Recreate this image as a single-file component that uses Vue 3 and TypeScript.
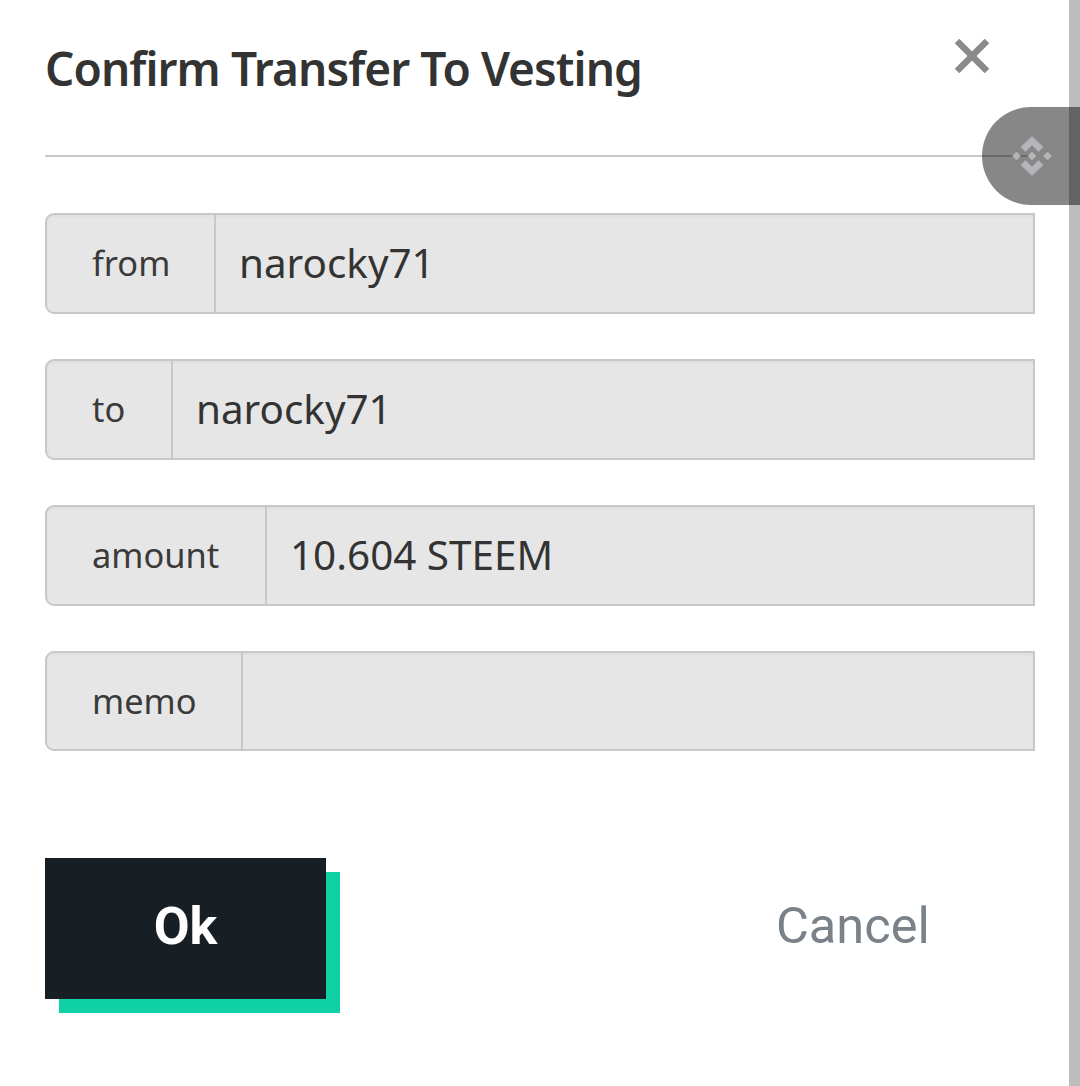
<script setup lang="ts">
interface Field { label: string; value: string; labelWidth: number }
const fields: Field[] = [
  { label: 'from', value: 'narocky71', labelWidth: 169 },
  { label: 'to', value: 'narocky71', labelWidth: 126 },
  { label: 'amount', value: '10.604 STEEM', labelWidth: 220 },
  { label: 'memo', value: '', labelWidth: 196 },
]
</script>

<template>
  <div class="page">
    <main class="dialog">
      <header class="head">
        <h1 class="title">Confirm Transfer To Vesting</h1>
        <svg class="close" viewBox="0 0 34 34" width="34" height="34" aria-label="Close">
          <path d="M2 2 L32 32 M32 2 L2 32" stroke="#8a8a8a" stroke-width="6.5" fill="none" />
        </svg>
      </header>
      <hr class="rule" />
      <section class="fields">
        <div v-for="f in fields" :key="f.label" class="row">
          <span class="label" :style="{ width: f.labelWidth + 'px' }">{{ f.label }}</span>
          <span class="value">{{ f.value }}</span>
        </div>
      </section>
      <footer class="actions">
        <button class="ok" type="button">Ok</button>
        <button class="cancel" type="button">Cancel</button>
      </footer>
    </main>
    <aside class="scrollbar"></aside>
    <div class="float">
      <svg viewBox="0 0 40 40" width="40" height="40">
        <g fill="#b4b6bb" stroke="#b4b6bb" stroke-width="0.6">
          <path d="M20 0.500 L31 11 L26.500 15.500 L20 9 L13.500 15.500 L9 11 Z" />
          <path d="M20 39.500 L31 29 L26.500 24.500 L20 31 L13.500 24.500 L9 29 Z" />
          <path d="M20 16 L24 20 L20 24 L16 20 Z" />
          <path d="M4.500 16 L8.500 20 L4.500 24 L0.500 20 Z" />
          <path d="M35.500 16 L39.500 20 L35.500 24 L31.500 20 Z" />
        </g>
      </svg>
    </div>
  </div>
</template>

<style scoped>
.page {
  position: relative;
  width: 1080px;
  height: 1086px;
  display: flex;
  background: #fff;
  overflow: hidden;
  font-family: "Noto Sans", "Open Sans", sans-serif;
  color: #333;
}
.dialog {
  flex: 1;
  padding: 0 34px 0 45px;
  min-width: 0;
}
.head {
  height: 155px;
  display: flex;
  align-items: flex-start;
  justify-content: space-between;
}
.title {
  margin: 38px 0 0;
  font-size: 46px;
  line-height: 60px;
  font-weight: 600;
  letter-spacing: -0.92px;
  color: #333;
}
.close {
  margin: 39px 46px 0 0;
}
.rule {
  margin: 0;
  border: 0;
  height: 2px;
  background: #c9c9c9;
}
.fields {
  margin-top: 56px;
  display: flex;
  flex-direction: column;
  gap: 45px;
}
.row {
  height: 101px;
  box-sizing: border-box;
  display: flex;
  border: 2px solid #c8c8c8;
  border-radius: 9px 0 0 9px;
  background: #e6e6e6;
  box-shadow: inset 0 2px 3px rgba(0, 0, 0, 0.03);
}
.row:last-child {
  height: 100px;
}
.label {
  box-sizing: border-box;
  flex: none;
  padding: 0 0 2px 45px;
  display: flex;
  align-items: center;
  font-size: 34.4px;
  color: #3a3a3a;
  border-right: 2px solid #c8c8c8;
}
.value {
  flex: 1;
  display: flex;
  align-items: center;
  padding: 0 0 2px 23px;
  font-size: 40.4px;
  color: #333;
}
.actions {
  margin-top: 107px;
  display: flex;
  align-items: center;
}
.ok {
  width: 281px;
  height: 141px;
  border: 0;
  background: #171f24;
  box-shadow: 14px 14px 0 #0fd1a5;
  color: #fff;
  font-family: Roboto, sans-serif;
  font-size: 52px;
  font-weight: 700;
  padding: 0 0 5px;
}
.cancel {
  margin-left: 450px;
  border: 0;
  background: none;
  padding: 0 0 7px;
  font-family: Roboto, sans-serif;
  font-size: 50.5px;
  color: #7a8188;
}
.scrollbar {
  flex: none;
  width: 11px;
  background: #bdbdbd;
}
.float {
  position: absolute;
  left: 982px;
  top: 107px;
  width: 98px;
  height: 98px;
  box-sizing: border-box;
  padding-left: 30px;
  display: flex;
  align-items: center;
  border-radius: 49px 0 0 49px;
  background: rgba(0, 0, 0, 0.47);
}
</style>
